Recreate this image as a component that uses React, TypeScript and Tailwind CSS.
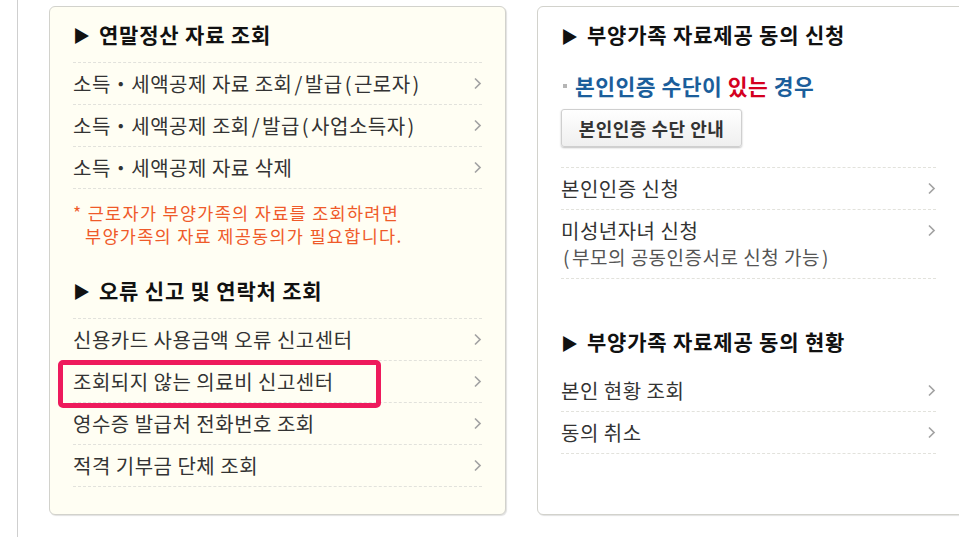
import type { ReactNode } from 'react';

const font = "font-['Noto_Sans_CJK_KR','Noto_Sans',sans-serif]";

// widen ascii punctuation a little, the reference font sets it wider
function Txt({ text }: { text: string }) {
  const parts = text.split(/([/()])/);
  return (
    <>
      {parts.map((p, i) =>
        /^[/()]$/.test(p) ? (
          <span key={i} className="px-[2px]">
            {p}
          </span>
        ) : (
          <span key={i}>{p}</span>
        )
      )}
    </>
  );
}

function Chevron() {
  return (
    <svg width="9" height="13" viewBox="0 0 9 13" className="shrink-0">
      <polyline points="2,1.5 7,6.5 2,11.5" fill="none" stroke="#a3a3a3" strokeWidth="1.7" />
    </svg>
  );
}

function Heading({ children, bordered = true }: { children: ReactNode; bordered?: boolean }) {
  return (
    <div
      className={`h-[56px] flex items-center gap-[9px] text-[21px] tracking-[0.8px] font-bold text-[#111] ${
        bordered ? 'border-b border-dashed border-[#e2e2dc]' : ''
      }`}
    >
      <span className="text-[17px] leading-none tracking-normal">▶</span>
      <span>{children}</span>
    </div>
  );
}

function Row({ label, sub }: { label: string; sub?: string }) {
  return (
    <div className="flex items-center justify-between border-b border-dashed border-[#e2e2dc] min-h-[42px]">
      <div className={sub ? 'pt-[8px] pb-[8px]' : ''}>
        <div className="text-[20px] leading-[26px] tracking-[0.5px] text-[#333]">
          <Txt text={label} />
        </div>
        {sub && (
          <div className="text-[19px] leading-[26px] tracking-[0.5px] text-[#555]">
            <Txt text={sub} />
          </div>
        )}
      </div>
      <div className={sub ? 'self-start pt-[14px]' : ''}>
        <Chevron />
      </div>
    </div>
  );
}

export default function App() {
  const yearEnd = [
    '소득・세액공제 자료 조회/발급(근로자)',
    '소득・세액공제 조회/발급(사업소득자)',
    '소득・세액공제 자료 삭제',
  ];
  const errors = [
    '신용카드 사용금액 오류 신고센터',
    '조회되지 않는 의료비 신고센터',
    '영수증 발급처 전화번호 조회',
    '적격 기부금 단체 조회',
  ];

  return (
    <div className={`${font} w-[959px] h-[537px] overflow-hidden bg-white`}>
      <div className="ml-[17px] h-full border-l border-[#cfcfcf] pl-[31px] pt-[6px] flex gap-[31px]">
        {/* left panel */}
        <div className="relative w-[457px] h-[509px] shrink-0 rounded-[6px] border border-[#d2d2cc] bg-[#fffef3] shadow-[1px_1px_1px_rgba(0,0,0,0.12)] px-[23px]">
          <Heading>연말정산 자료 조회</Heading>
          {yearEnd.map((t) => (
            <Row key={t} label={t} />
          ))}
          <div className="pt-[12px] pb-[16px] text-[17.5px] leading-[23px] tracking-[1.3px] text-[#ef5a2a]">
            <div>* 근로자가 부양가족의 자료를 조회하려면</div>
            <div className="pl-[12px]">부양가족의 자료 제공동의가 필요합니다.</div>
          </div>
          <Heading>오류 신고 및 연락처 조회</Heading>
          {errors.map((t) => (
            <Row key={t} label={t} />
          ))}
          <div className="absolute left-[8px] top-[353px] w-[323px] h-[48px] rounded-[5px] border-[5px] border-[#ee1a5c]" />
        </div>

        {/* right panel */}
        <div className="w-[460px] h-[509px] shrink-0 rounded-[6px] border border-[#d2d2cc] bg-white shadow-[1px_1px_1px_rgba(0,0,0,0.12)] px-[23px]">
          <div className="w-[375px]">
            <Heading bordered={false}>부양가족 자료제공 동의 신청</Heading>
            <div className="border-b border-dashed border-[#e2e2dc] pt-[10px] pb-[20px]">
              <div className="flex items-center gap-[8px] text-[21.5px] leading-[26px] tracking-[0.5px] font-bold text-[#1b5e9b]">
                <span className="w-[4px] h-[4px] bg-[#b5b5b5] ml-[2px]" />
                <span>
                  본인인증 수단이 <span className="text-[#d4001f]">있는</span> 경우
                </span>
              </div>
              <button className="mt-[10px] h-[38px] w-[181px] rounded-[3px] border border-[#cfcfcf] bg-gradient-to-b from-white to-[#efefef] shadow-[0_1px_2px_rgba(0,0,0,0.25)] text-[18px] tracking-[0.5px] font-bold text-[#333]">
                본인인증 수단 안내
              </button>
            </div>
            <Row label="본인인증 신청" />
            <Row label="미성년자녀 신청" sub="(부모의 공동인증서로 신청 가능)" />
            <div className="mt-[35px]">
              <Heading bordered={false}>부양가족 자료제공 동의 현황</Heading>
            </div>
            <Row label="본인 현황 조회" />
            <Row label="동의 취소" />
          </div>
        </div>
      </div>
    </div>
  );
}
